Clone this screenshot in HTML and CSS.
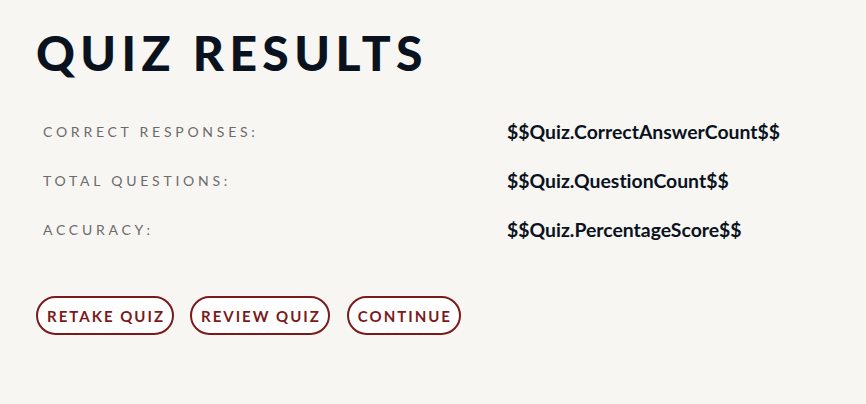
FILE: index.html
```html
<!DOCTYPE html>
<html>
<head>
	<meta charset="utf-8">
	<title>Quiz Results</title>
	<link rel="stylesheet" href="styles.css">
</head>

<body>
	<div class="results">
		<h1 class="title">Quiz Results</h1>

		<div class="stats">
			<div class="row">
				<div class="label">Correct Responses:</div>
				<div class="value">$$Quiz.CorrectAnswerCount$$</div>
			</div>
			<div class="row">
				<div class="label">Total Questions:</div>
				<div class="value">$$Quiz.QuestionCount$$</div>
			</div>
			<div class="row">
				<div class="label">Accuracy:</div>
				<div class="value">$$Quiz.PercentageScore$$</div>
			</div>
		</div>

		<div class="actions">
			<button class="btn">Retake Quiz</button>
			<button class="btn">Review Quiz</button>
			<button class="btn">Continue</button>
		</div>
	</div>
</body>
</html>
```

FILE: styles.css
```css
body, html {
	height: 100%;
	min-height: 100%;
}

body {
	margin: 0;
	padding: 0;
	background: #f8f6f3;
	font-family: Lato, "Open Sans", sans-serif;
	font-variant-ligatures: none;
}

.results {
	padding: 22px 36px;
}

.title {
	margin: 0 0 23px;
	font-size: 48px;
	font-weight: 900;
	line-height: 62px;
	letter-spacing: 5.4px;
	text-transform: uppercase;
	color: #0a1220;
}

.stats {
	padding-left: 7px;
}

.row {
	display: grid;
	grid-template-columns: 464px 1fr;
	align-items: center;
	height: 49px;
}

.label {
	font-size: 14px;
	letter-spacing: 3.75px;
	text-transform: uppercase;
	color: #6b6b6b;
}

.value {
	font-size: 19.4px;
	font-weight: 700;
	color: #0a1220;
}

.actions {
	display: flex;
	gap: 16px;
	margin-top: 42px;
}

.btn {
	font-family: inherit;
	font-size: 15px;
	font-weight: 700;
	letter-spacing: 2px;
	text-transform: uppercase;
	color: #7a1a1a;
	background: #fff;
	border: 2px solid #7a1a1a;
	border-radius: 20px;
	height: 39px;
	padding: 0 7px 0 9px;
	cursor: pointer;
}

.btn + .btn + .btn {
	margin-left: 1px;
}
```
